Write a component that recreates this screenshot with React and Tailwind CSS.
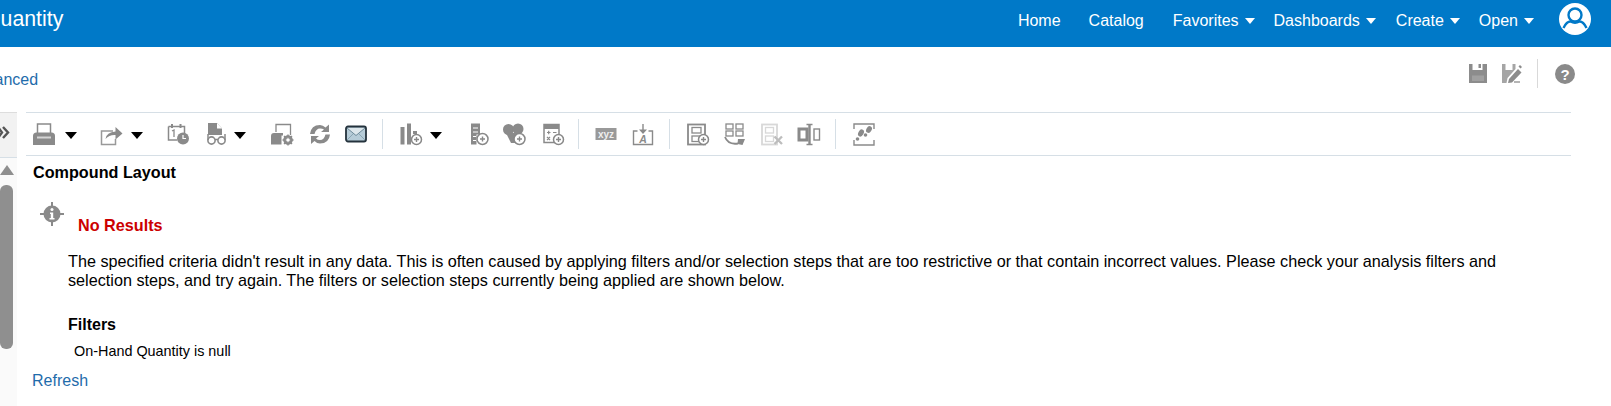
import React from 'react';

const Caret = ({ className = '' }) => (
    <svg viewBox="0 0 12 7" className={`w-[12px] h-[7px] mt-[3px] shrink-0 ${className}`}>
        <path d="M0 0h12L6 7z" fill="#000" />
    </svg>
);

const Plus = ({ x = 18, y = 18, r = 5 }) => (
    <g>
        <circle cx={x} cy={y} r={r} fill="#fff" stroke="#888" strokeWidth="1.5" />
        <path d={`M${x - 2.5} ${y}h5M${x} ${y - 2.5}v5`} stroke="#888" strokeWidth="1.4" />
    </g>
);

const icons = {
    print: (
        <g>
            <path d="M5.500 11V2h13v9" fill="none" stroke="#8a8a8a" strokeWidth="1.500" />
            <path d="M1 14q0-3.500 3.500-3.500h15q3.500 0 3.500 3.500v9H1z" fill="#8a8a8a" />
            <path d="M5 14.500h14v2H5z" fill="#d4d4d4" />
        </g>
    ),
    share: (
        <g>
            <path d="M14 9H2.500v13.500h14V17" fill="none" stroke="#999" strokeWidth="1.500" />
            <path d="M6.500 17q1-7 10-7.500V5l7 6.500-7 6V13q-6-.5-10 4z" fill="#8a8a8a" />
        </g>
    ),
    calendar: (
        <g>
            <path d="M2.500 4.500h16V11M11 18H2.500V4.500" fill="none" stroke="#8a8a8a" strokeWidth="1.500" />
            <path d="M6 2v4M14.500 2v4" stroke="#8a8a8a" strokeWidth="2" />
            <path d="M6 9l2-1v7" fill="none" stroke="#8a8a8a" strokeWidth="1.300" />
            <circle cx="17" cy="16.500" r="6" fill="#8a8a8a" />
            <path d="M17 13v3.500h3" fill="none" stroke="#fff" strokeWidth="1.200" />
        </g>
    ),
    report: (
        <g>
            <path d="M4 1h9l5 5.500V13H4z" fill="#8a8a8a" />
            <path d="M13 1v5.500h5z" fill="#fff" />
            <circle cx="7.500" cy="18.500" r="3.600" fill="#fff" stroke="#8a8a8a" strokeWidth="1.600" />
            <circle cx="17.500" cy="18.500" r="3.600" fill="#fff" stroke="#8a8a8a" strokeWidth="1.600" />
            <path d="M4 18V12M21 18v-6M11 17.500h3" stroke="#8a8a8a" strokeWidth="1.500" />
        </g>
    ),
    gearPrint: (
        <g>
            <path d="M6 10V2.500h14.500V13" fill="none" stroke="#8a8a8a" strokeWidth="1.300" />
            <path d="M1 14q0-3 3-3h9v2.500h-1.500v9H1z" fill="#8a8a8a" />
            <circle cx="18" cy="18" r="3.600" fill="none" stroke="#8a8a8a" strokeWidth="2.400" />
            <path d="M18 12.500v11M12.500 18h11M14 14l8 8M22 14l-8 8" stroke="#8a8a8a" strokeWidth="1.400" />
            <circle cx="18" cy="18" r="1.800" fill="#fff" />
        </g>
    ),
    refresh: (
        <g fill="#8a8a8a">
            <path d="M2 12Q3 3 12 3q3 0 5.500 2.500L21 2.500v7.500h-8l3-2.500Q14.500 6.500 12 6.500 8 6.500 6.500 12z" />
            <path d="M22 12.500q-1 9-10 9-3 0-5.500-2.500L3 22v-8h8l-3 2.500q1.500 1.500 4 1.500 4 0 5.500-5.500z" />
        </g>
    ),
    mail: (
        <g>
            <rect x="2" y="4.500" width="20" height="15" rx="2" fill="#b6ccd8" stroke="#24323c" strokeWidth="1.800" />
            <path d="M3 6l9 7.500L21 6" fill="#dde7ec" stroke="#6d8a99" strokeWidth="1" />
            <path d="M3 18l6-6M21 18l-6-6" stroke="#7f9cab" strokeWidth=".8" />
        </g>
    ),
    chart: (
        <g>
            <rect x="1.500" y="5" width="4" height="17.500" fill="#8a8a8a" />
            <rect x="8" y="1.500" width="4" height="21" fill="#8a8a8a" />
            <rect x="14" y="9" width="4" height="3" fill="#8a8a8a" />
            <Plus x={17.500} y={17.500} r={5} />
        </g>
    ),
    listPlus: (
        <g>
            <path d="M5 1.500h9v11h-3.500v10H5z" fill="#8a8a8a" />
            <path d="M7 6h5M7 10h5M7 14.500h3M7 18.500h3" stroke="#fff" strokeWidth="1" />
            <Plus x={16.500} y={17} r={5.500} />
        </g>
    ),
    shapes: (
        <g fill="#8a8a8a">
            <circle cx="6.500" cy="7.500" r="5.500" />
            <circle cx="16" cy="7" r="5.500" />
            <path d="M4 11h10v10H9z" />
            <Plus x={17.500} y={17} r={5.500} />
        </g>
    ),
    calc: (
        <g>
            <rect x="3" y="2.500" width="15" height="18" fill="none" stroke="#8a8a8a" strokeWidth="1.500" />
            <rect x="3" y="2.500" width="15" height="4.500" fill="#8a8a8a" />
            <path d="M6 10.500h3.500M7.700 8.700v3.500M12 10.500h3.500M6 15l3 3M9 15l-3 3" stroke="#8a8a8a" strokeWidth="1.200" />
            <Plus x={17.500} y={17.500} r={5} />
        </g>
    ),
    xyz: (
        <g>
            <rect x="1.500" y="6" width="21" height="12" fill="#999" />
            <text x="12" y="15.500" textAnchor="middle" fontSize="10" fontWeight="700" fill="#eee" fontFamily="'Liberation Sans', sans-serif">xyz</text>
        </g>
    ),
    titleA: (
        <g>
            <path d="M6.500 9H2.500v13.500h19V9h-4M12 2v8" fill="none" stroke="#8a8a8a" strokeWidth="1.400" />
            <path d="M8 7.500h8L12 12z" fill="#8a8a8a" />
            <text x="12" y="21" textAnchor="middle" fontSize="10.500" fontWeight="700" fontStyle="italic" fill="#8a8a8a" fontFamily="'Liberation Sans', sans-serif">A</text>
        </g>
    ),
    layoutAdd: (
        <g>
            <rect x="2" y="2.500" width="17" height="20" fill="none" stroke="#8a8a8a" strokeWidth="1.800" />
            <rect x="6" y="5.500" width="9" height="5.500" fill="none" stroke="#8a8a8a" strokeWidth="1.300" />
            <rect x="6" y="14" width="9" height="5.500" fill="none" stroke="#8a8a8a" strokeWidth="1.300" />
            <Plus x={17.500} y={17.500} r={5} />
        </g>
    ),
    layoutSwap: (
        <g fill="none" stroke="#8a8a8a" strokeWidth="1.300">
            <rect x="3" y="2" width="7" height="5" />
            <rect x="3" y="9" width="7" height="5" />
            <rect x="13" y="2" width="7" height="5" />
            <rect x="13" y="9" width="7" height="5" />
            <path d="M2 15q3 8 13 6.500" strokeWidth="1.800" />
            <path d="M15 17l7 0-2.500 6-5-1z" fill="#8a8a8a" stroke="none" />
        </g>
    ),
    layoutRemove: (
        <g>
            <rect x="2" y="2.500" width="15" height="20" fill="none" stroke="#d8d8d8" strokeWidth="1.800" />
            <rect x="5.500" y="5.500" width="8" height="5.500" fill="none" stroke="#d8d8d8" strokeWidth="1.300" />
            <rect x="5.500" y="14" width="8" height="5.500" fill="none" stroke="#d8d8d8" strokeWidth="1.300" />
            <path d="M14.500 14.500l7.500 7.500M22 14.500l-7.500 7.500" stroke="#bdbdbd" strokeWidth="2.300" />
        </g>
    ),
    columns: (
        <g>
            <rect x="2" y="7" width="8" height="11" fill="none" stroke="#8a8a8a" strokeWidth="3" />
            <rect x="17" y="7" width="5.500" height="11" fill="none" stroke="#8a8a8a" strokeWidth="1.400" />
            <path d="M12.500 2v21" stroke="#8a8a8a" strokeWidth="2.400" />
            <path d="M9.500 2.500h6M9.500 22.500h6" stroke="#8a8a8a" strokeWidth="1.500" />
        </g>
    ),
    steps: (
        <g>
            <path d="M2 7V2h20v5M2 18v5h20v-5" fill="none" stroke="#8a8a8a" strokeWidth="1.400" />
            <ellipse cx="9" cy="11" rx="2.600" ry="3.800" fill="#8a8a8a" transform="rotate(30 9 11)" />
            <circle cx="5.500" cy="17" r="1.800" fill="#8a8a8a" />
            <ellipse cx="17" cy="7.500" rx="2.600" ry="3.600" fill="#8a8a8a" transform="rotate(30 17 7.500)" />
            <circle cx="13.500" cy="13" r="1.800" fill="#8a8a8a" />
        </g>
    ),
};

const Tool = ({ name, className }) => (
    <svg viewBox="0 0 24 24" className={`w-[24px] h-[24px] shrink-0 ${className}`}>
        {icons[name]}
    </svg>
);

const Sep = ({ className }) => <div className={`w-px h-[30px] bg-[#d6dfe6] shrink-0 ${className}`} />;

const NavItem = ({ label, menu, className = '' }) => (
    <div className={`flex items-center ${className}`}>
        <span>{label}</span>
        {menu && (
            <svg viewBox="0 0 10 6" className="w-[10px] h-[6px] ml-[6px]">
                <path d="M0 0h10L5 6z" fill="#fff" />
            </svg>
        )}
    </div>
);

export default function App() {
    return (
        <div className="w-[1611px] h-[406px] overflow-hidden bg-white text-black font-['Liberation_Sans',Arial,sans-serif]">
            <header className="h-[47px] bg-[#0079c8] flex items-center text-white text-[16px] pr-[20px]">
                <div className="text-[21.3px] -ml-[16px] pb-[8px]">Quantity</div>
                <nav className="ml-auto flex items-center pb-[6px]">
                    <NavItem label="Home" />
                    <NavItem label="Catalog" className="ml-[28px]" />
                    <NavItem label="Favorites" menu className="ml-[29px]" />
                    <NavItem label="Dashboards" menu className="ml-[19px]" />
                    <NavItem label="Create" menu className="ml-[20px]" />
                    <NavItem label="Open" menu className="ml-[19px]" />
                    <svg viewBox="0 0 32 32" className="w-[32px] h-[32px] ml-[25px] mb-[3px]">
                        <circle cx="16" cy="16" r="16" fill="#fff" />
                        <circle cx="16" cy="12" r="6.500" fill="none" stroke="#0079c8" strokeWidth="2.400" />
                        <path d="M4.500 25q3-6.500 7-6.500 4.500 2.500 9 0 4 0 7 6.500" fill="none" stroke="#0079c8" strokeWidth="2.400" />
                    </svg>
                </nav>
            </header>

            <div className="h-[65px] flex items-start relative">
                <a className="text-[16px] text-[#1f6cab] -ml-[33px] mt-[21px]">Advanced</a>
                <div className="ml-auto mr-[36px] mt-[12px] flex items-center">
                    <svg viewBox="0 0 18 19" className="w-[18px] h-[19px]">
                        <path d="M0 0h3.500v6h10V0H18v19H0z" fill="#8c8c8c" />
                        <path d="M3 11.500h12V17H3z" fill="#a0a0a0" />
                        <path d="M9.500 0H12v4H9.500z" fill="#8c8c8c" />
                    </svg>
                    <svg viewBox="0 0 20 19" className="w-[20px] h-[19px] ml-[15px]">
                        <path d="M0 0h3.500v6h7V0h3v5l-8 9-1 5H0z" fill="#a5a5a5" />
                        <path d="M7 15l9-10 3.500 3.500L10 18.500l-4 .5z" fill="#8c8c8c" />
                        <path d="M16.500 2.500l1.500-1.500 2 2-1.500 1.500z" fill="#8c8c8c" />
                        <path d="M12 17h6v2h-6z" fill="#b5b5b5" />
                    </svg>
                    <div className="w-px h-[29px] bg-[#d9d9d9] ml-[15px]" />
                    <svg viewBox="0 0 20 20" className="w-[20px] h-[20px] ml-[17px]">
                        <circle cx="10" cy="10" r="10" fill="#8a8a8a" />
                        <text x="10" y="15.500" textAnchor="middle" fontSize="15" fontWeight="700" fill="#fff" fontFamily="'Liberation Sans', sans-serif">?</text>
                    </svg>
                </div>
            </div>

            <div className="flex h-[294px]">
                <aside className="w-[17px] shrink-0 bg-[#fafafa] border-t border-[#dddddd] flex flex-col">
                    <div className="h-[45px] bg-[#f2f2f2] border-b border-[#d6dfe6] flex items-center shrink-0">
                        <svg viewBox="0 0 10 13" className="w-[10px] h-[13px] mb-[6px]">
                            <path d="M-2 1l4 5.500-4 5.500M3 1l5 5.500-5 5.500" fill="none" stroke="#555" strokeWidth="2.400" />
                        </svg>
                    </div>
                    <svg viewBox="0 0 14 10" className="w-[14px] h-[10px] mt-[7px] shrink-0">
                        <path d="M7 0l7 10H0z" fill="#8f8f8f" />
                    </svg>
                    <div className="w-[13px] h-[164px] mt-[10px] rounded-[6px] bg-[#8f8f8f]" />
                </aside>

                <main className="ml-[9px] mr-[40px] flex-1 min-w-0">
                    <div className="h-[44px] flex items-center border-y border-[#d6dfe6]">
                        <Tool name="print" className="ml-[6px]" />
                        <Caret className="ml-[9px]" />
                        <Tool name="share" className="ml-[22px]" />
                        <Caret className="ml-[8px]" />
                        <Tool name="calendar" className="ml-[23px]" />
                        <Tool name="report" className="ml-[14px]" />
                        <Caret className="ml-[6px]" />
                        <Tool name="gearPrint" className="ml-[24px]" />
                        <Tool name="refresh" className="ml-[14px]" />
                        <Tool name="mail" className="ml-[12px]" />
                        <Sep className="ml-[14px]" />
                        <Tool name="chart" className="ml-[16px]" />
                        <Caret className="ml-[7px]" />
                        <Tool name="listPlus" className="ml-[24px]" />
                        <Tool name="shapes" className="ml-[12px]" />
                        <Tool name="calc" className="ml-[15px]" />
                        <Sep className="ml-[13px]" />
                        <Tool name="xyz" className="ml-[15px]" />
                        <Tool name="titleA" className="ml-[13px]" />
                        <Sep className="ml-[14px]" />
                        <Tool name="layoutAdd" className="ml-[16px]" />
                        <Tool name="layoutSwap" className="ml-[13px]" />
                        <Tool name="layoutRemove" className="ml-[13px]" />
                        <Tool name="columns" className="ml-[13px]" />
                        <Sep className="ml-[14px]" />
                        <Tool name="steps" className="ml-[16px]" />
                    </div>

                    <div className="pl-[7px]">
                        <h2 className="text-[16.2px] font-bold leading-[18px] mt-[7px]">Compound Layout</h2>
                        <div className="flex items-end mt-[21px] ml-[7px]">
                            <svg viewBox="0 0 24 24" className="w-[24px] h-[24px] mb-[8px]">
                                <path d="M12 0v24M0 12h24" stroke="#8a8a8a" strokeWidth="2" />
                                <circle cx="12" cy="12" r="8.500" fill="#8a8a8a" />
                                <circle cx="12" cy="7.500" r="1.500" fill="#fff" />
                                <path d="M10 10.500h3.200V16h1.300v1.500h-5V16h1.300v-4H10z" fill="#fff" />
                            </svg>
                            <div className="ml-[14px] text-[16.2px] font-bold text-[#cc0000] leading-[18px]">No Results</div>
                        </div>
                        <div className="ml-[35px] mt-[18px] text-[16.2px] leading-[19px] w-[1440px]">
                            The specified criteria didn't result in any data. This is often caused by applying filters and/or selection steps that are too restrictive or that contain incorrect values. Please check your analysis filters and selection steps, and try again. The filters or selection steps currently being applied are shown below.
                        </div>
                        <div className="ml-[35px] mt-[26px] text-[16px] font-bold leading-[18px]">Filters</div>
                        <div className="ml-[41px] mt-[9px] text-[14.4px] leading-[16px]">On-Hand Quantity is null</div>
                    </div>
                    <a className="block ml-[6px] mt-[13px] text-[16px] leading-[18px] text-[#1f6cab]">Refresh</a>
                </main>
            </div>
        </div>
    );
}
